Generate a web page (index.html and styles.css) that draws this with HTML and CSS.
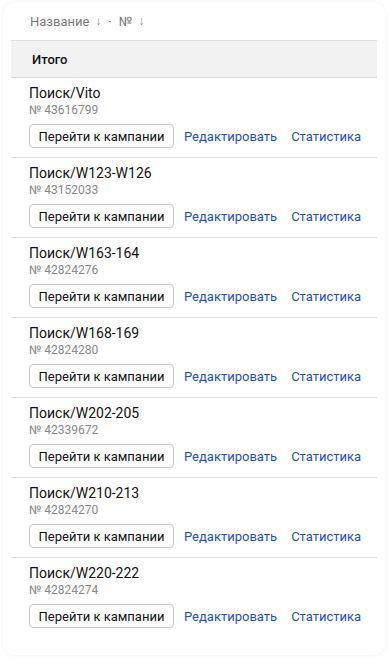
FILE: index.html
```html
<!DOCTYPE html>
<html lang="ru">
<head>
    <meta charset="UTF-8">
    <meta name="viewport" content="width=device-width, initial-scale=1.0">
    <title>Кампании</title>
    <link rel="stylesheet" href="styles.css">
</head>
<body>
    <div class="card">
        <div class="sort-bar">
            <span>Название</span>
            <span class="arrow">↓</span>
            <span class="dot">·</span>
            <span>№</span>
            <span class="arrow">↓</span>
        </div>

        <div class="total-row">Итого</div>

        <div class="campaign">
            <div class="campaign-name">Поиск/Vito</div>
            <div class="campaign-id">№ 43616799</div>
            <div class="campaign-actions">
                <button class="btn">Перейти к кампании</button>
                <a href="#" class="link">Редактировать</a>
                <a href="#" class="link">Статистика</a>
            </div>
        </div>

        <div class="campaign">
            <div class="campaign-name">Поиск/W123-W126</div>
            <div class="campaign-id">№ 43152033</div>
            <div class="campaign-actions">
                <button class="btn">Перейти к кампании</button>
                <a href="#" class="link">Редактировать</a>
                <a href="#" class="link">Статистика</a>
            </div>
        </div>

        <div class="campaign">
            <div class="campaign-name">Поиск/W163-164</div>
            <div class="campaign-id">№ 42824276</div>
            <div class="campaign-actions">
                <button class="btn">Перейти к кампании</button>
                <a href="#" class="link">Редактировать</a>
                <a href="#" class="link">Статистика</a>
            </div>
        </div>

        <div class="campaign">
            <div class="campaign-name">Поиск/W168-169</div>
            <div class="campaign-id">№ 42824280</div>
            <div class="campaign-actions">
                <button class="btn">Перейти к кампании</button>
                <a href="#" class="link">Редактировать</a>
                <a href="#" class="link">Статистика</a>
            </div>
        </div>

        <div class="campaign">
            <div class="campaign-name">Поиск/W202-205</div>
            <div class="campaign-id">№ 42339672</div>
            <div class="campaign-actions">
                <button class="btn">Перейти к кампании</button>
                <a href="#" class="link">Редактировать</a>
                <a href="#" class="link">Статистика</a>
            </div>
        </div>

        <div class="campaign">
            <div class="campaign-name">Поиск/W210-213</div>
            <div class="campaign-id">№ 42824270</div>
            <div class="campaign-actions">
                <button class="btn">Перейти к кампании</button>
                <a href="#" class="link">Редактировать</a>
                <a href="#" class="link">Статистика</a>
            </div>
        </div>

        <div class="campaign">
            <div class="campaign-name">Поиск/W220-222</div>
            <div class="campaign-id">№ 42824274</div>
            <div class="campaign-actions">
                <button class="btn">Перейти к кампании</button>
                <a href="#" class="link">Редактировать</a>
                <a href="#" class="link">Статистика</a>
            </div>
        </div>
    </div>
</body>
</html>
```

FILE: styles.css
```css
* {
    margin: 0;
    padding: 0;
    box-sizing: border-box;
    font-family: Roboto, 'Liberation Sans', Arial, sans-serif;
}

body {
    background-color: #fff;
    padding: 2px 5px 10px 3px;
}

.card {
    background-color: white;
    width: 382px;
    padding: 0 8px 18px;
    border-radius: 12px;
    box-shadow: 0 0 4px rgba(0, 0, 0, 0.06);
}

.sort-bar {
    height: 39px;
    display: flex;
    align-items: center;
    gap: 6px;
    padding-left: 19px;
    color: #7a7a7a;
    font-size: 13px;
    border-bottom: 1px solid #dedede;
}

.sort-bar .arrow {
    font-size: 12px;
    color: #8a8a8a;
}

.sort-bar .dot {
    padding: 0 1px;
}

.total-row {
    height: 37px;
    display: flex;
    align-items: center;
    padding-left: 21px;
    background-color: #f2f2f2;
    color: #111;
    font-size: 13px;
    font-weight: 500;
    border-bottom: 1px solid #dedede;
}

.campaign {
    padding: 6px 0 9px 18px;
    border-bottom: 1px solid #dedede;
}

.campaign:last-child {
    border-bottom: none;
}

.campaign-name {
    font-size: 14px;
    line-height: 18px;
    color: #111;
}

.campaign-id {
    font-size: 12px;
    line-height: 16px;
    color: #888;
}

.campaign-actions {
    display: flex;
    align-items: center;
    margin-top: 6px;
}

.btn {
    width: 145px;
    height: 24px;
    background-color: white;
    border: 1px solid #c8c8c8;
    border-radius: 4px;
    font-size: 13px;
    color: #111;
    cursor: pointer;
}

.link {
    color: #1e4fc2;
    font-size: 13px;
    text-decoration: none;
    margin-left: 10px;
}

.link + .link {
    margin-left: 14px;
}
```
